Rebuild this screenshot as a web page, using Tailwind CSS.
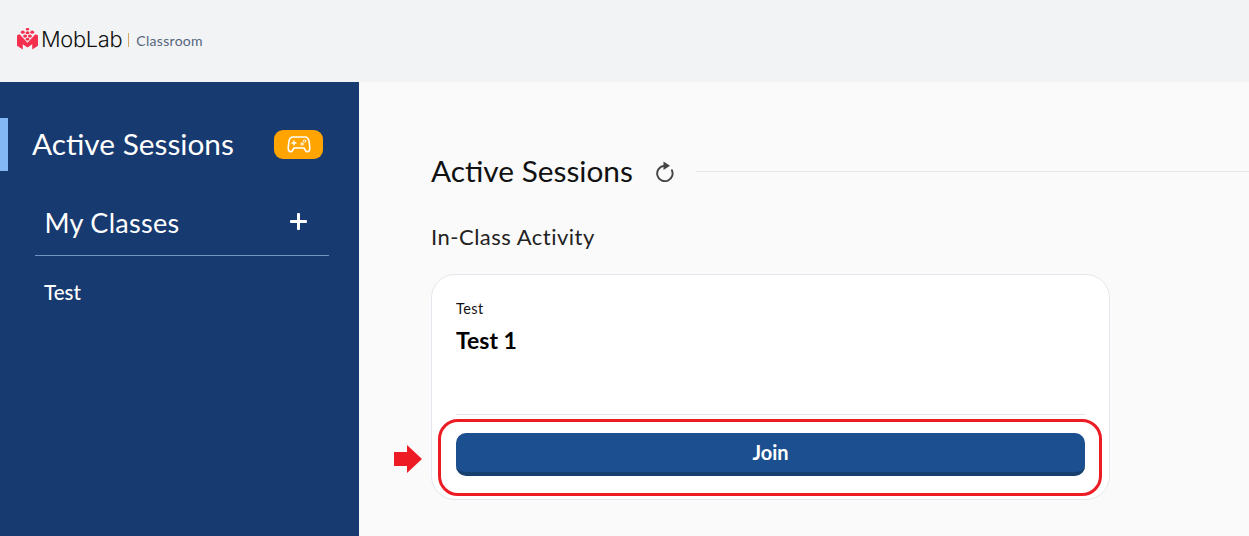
<!DOCTYPE html>
<html lang="en">
<head>
    <meta charset="UTF-8">
    <title>MobLab Classroom</title>
    <script src="https://cdn.jsdelivr.net/npm/@tailwindcss/browser@4"></script>
</head>
<body class="h-[536px] overflow-hidden bg-[#fafafa] font-['Lato',sans-serif]">
    <!-- Header -->
    <header class="flex h-[82px] items-center bg-[#f2f3f5] pl-[17px] pb-[3px]">
        <svg class="mb-[2px] h-[22px] w-[21px]" viewBox="0 0 20 21" fill="#f5304f">
            <ellipse cx="10" cy="1.200" rx="1.600" ry="1.300"/>
            <ellipse cx="5.500" cy="4" rx="1.900" ry="1.500"/>
            <ellipse cx="10" cy="4.500" rx="1.900" ry="1.500"/>
            <ellipse cx="14.500" cy="4" rx="1.900" ry="1.500"/>
            <ellipse cx="7.700" cy="7.700" rx="1.900" ry="1.500"/>
            <ellipse cx="12.300" cy="7.700" rx="1.900" ry="1.500"/>
            <ellipse cx="10" cy="10.700" rx="1.700" ry="1.400"/>
            <path d="M0 7L2.500 6L10 14L17.500 6L20 7V17L14.500 20.500V15.500L10 18.500L5.500 15.500V20.500L0 17Z"/>
        </svg>
        <span class="ml-[3px] font-['Inter',sans-serif] text-[21.800px] font-light tracking-[-0.3px] text-[#111]">MobLab</span>
        <span class="ml-[6px] h-[14px] w-px bg-[#d9a766]"></span>
        <span class="ml-[7px] mt-[2px] text-[14px] tracking-[0.3px] text-[#55657d]">Classroom</span>
    </header>

    <div class="flex h-[454px]">
        <!-- Sidebar -->
        <aside class="w-[359px] shrink-0 bg-[#173a70] pt-[36px] text-white">
            <div class="flex h-[53px] items-center border-l-[8px] border-[#84b8f5] pl-[24px]">
                <span class="mb-[2px] w-[242px] text-[29.800px] leading-none">Active Sessions</span>
                <span class="flex h-[29px] w-[49px] items-center justify-center rounded-[9px] bg-[#ffa400]">
                    <svg class="h-[20px] w-[24px]" viewBox="0 0 24 20" fill="none" stroke="white" stroke-width="1.600" stroke-linejoin="round" stroke-linecap="round">
                        <path d="M6 2H18C20.500 2 21.800 4 22.200 7L22.800 13C23 16.500 20 18 18.500 15.500L17 13H7L5.500 15.500C4 18 1 16.500 1.200 13L1.800 7C2.200 4 3.500 2 6 2Z"/>
                        <path d="M5 8H9M7 6V10" stroke-width="1.300"/>
                        <circle cx="17.500" cy="6" r="1.200" stroke-width="1"/>
                        <circle cx="15" cy="9" r="1.200" stroke-width="1"/>
                    </svg>
                </span>
            </div>
            <div class="ml-[35px] mt-[35px] w-[294px] border-b border-[#7393c0] pb-[15px]">
                <div class="flex items-center justify-between pl-[9.500px] pr-[22px]">
                    <span class="text-[27px] leading-[34px] tracking-[0.3px]">My Classes</span>
                    <svg class="mb-[3px] h-[17px] w-[17px]" viewBox="0 0 17 17" fill="white">
                        <rect x="7" y="0" width="3" height="17" rx="1"/>
                        <rect x="0" y="7" width="17" height="3" rx="1"/>
                    </svg>
                </div>
            </div>
            <p class="ml-[44px] mt-[23px] text-[20.500px] font-medium leading-[26px]">Test</p>
        </aside>

        <!-- Main -->
        <main class="relative min-w-0 flex-1 pl-[72px] pt-[70px]">
            <div class="flex items-center">
                <h1 class="text-[29.800px] leading-[38px] text-[#111]">Active Sessions</h1>
                <svg class="ml-[21px] h-[21px] w-[21px]" viewBox="0 0 21 21" fill="none">
                    <path d="M10 4.800A7.700 7.700 0 1 0 17.500 8.500" stroke="#444" stroke-width="1.900"/>
                    <path d="M9.500 0.500L16 4.800L9.500 9Z" fill="#444"/>
                </svg>
                <div class="ml-[21px] h-px flex-1 bg-[#e6e6ea]"></div>
            </div>
            <h2 class="mt-[33px] text-[22px] leading-[28px] tracking-[0.5px] text-[#222]">In-Class Activity</h2>
            <div class="mt-[23px] h-[226px] w-[679px] rounded-[24px] border border-[#e6e7ee] bg-white px-[24px] pt-[25px]">
                <p class="text-[14.500px] leading-[18px] tracking-[0.4px] text-[#111]">Test</p>
                <p class="mt-[7px] text-[23px] font-bold leading-[30px] text-black">Test 1</p>
                <div class="mt-[59px] border-t border-[#e6e7ee]"></div>
                <button class="mt-[18px] h-[43px] w-full rounded-[10px] border-b-[4px] border-[#17406f] bg-[#1b4f8f] pb-px text-[20px] font-bold text-white">Join</button>
            </div>

            <!-- Annotation over the card -->
            <div class="absolute left-[79px] top-[337px] h-[77px] w-[664px] rounded-[20px] border-[3px] border-[#ed1c24]"></div>
            <svg class="absolute left-[35px] top-[363px] h-[28px] w-[28px]" viewBox="0 0 28 28" fill="#ed1c24">
                <path d="M0 7H13V0L28 14L13 28V21H0Z"/>
            </svg>
        </main>
    </div>
</body>
</html>
